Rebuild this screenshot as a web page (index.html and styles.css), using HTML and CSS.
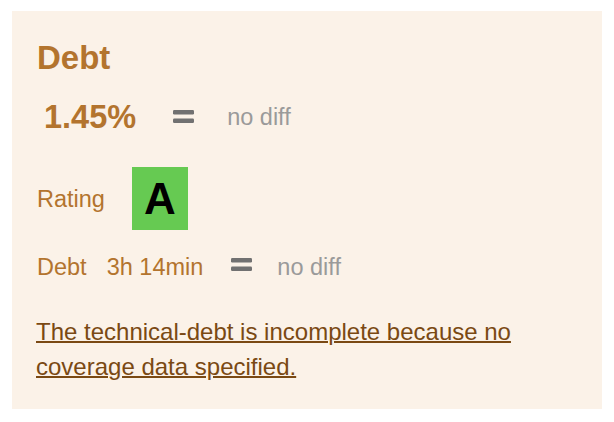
FILE: index.html
```html
<!DOCTYPE html>
<html lang="en">
<head>
<meta charset="utf-8">
<title>Debt</title>
<link rel="stylesheet" href="styles.css">
</head>
<body>
<section class="panel">
  <h2 class="title">Debt</h2>
  <div class="row row-main">
    <span class="big-value">1.45%</span>
    <svg class="eq eq-main" width="21" height="13" viewBox="0 0 21 13" aria-hidden="true"><rect x="0" y="0" width="21" height="4.5" rx="1.2"/><rect x="0" y="8.5" width="21" height="4.5" rx="1.2"/></svg>
    <span class="diff diff-main">no diff</span>
  </div>
  <div class="row row-rating">
    <span class="label">Rating</span>
    <span class="badge">A</span>
  </div>
  <div class="row row-debt">
    <span class="label">Debt</span>
    <span class="value">3h 14min</span>
    <svg class="eq eq-debt" width="21" height="13" viewBox="0 0 21 13" aria-hidden="true"><rect x="0" y="0" width="21" height="4.5" rx="1.2"/><rect x="0" y="8.5" width="21" height="4.5" rx="1.2"/></svg>
    <span class="diff diff-debt">no diff</span>
  </div>
  <p class="note"><a href="#" class="note-link">The technical-debt is incomplete because no coverage data specified.</a></p>
</section>
</body>
</html>
```
FILE: styles.css
```css
html, body {
  margin: 0;
  padding: 0;
  background: #ffffff;
}

body {
  font-family: "Liberation Sans", Arial, Helvetica, sans-serif;
  padding: 11px 12px 0 12px;
}

.panel {
  box-sizing: border-box;
  width: 590px;
  height: 398px;
  background: #fbf2e8;
  padding: 29px 23px 0 25px;
  display: flex;
  flex-direction: column;
  align-items: flex-start;
}

.title {
  margin: 0;
  font-size: 33px;
  line-height: 36px;
  font-weight: bold;
  color: #b3742e;
}

.row {
  display: flex;
  align-items: center;
}

.row-main {
  height: 40px;
  margin-top: 21px;
  margin-left: 7px;
}

.big-value {
  font-size: 32.5px;
  line-height: 40px;
  font-weight: bold;
  color: #b3742e;
}

.eq {
  fill: #717171;
  flex: none;
}

.eq-main {
  margin-left: 37px;
  margin-bottom: 2px;
}

.diff {
  font-size: 23.5px;
  line-height: 30px;
  color: #9a9a9a;
}

.diff-main {
  margin-left: 33px;
}

.row-rating {
  height: 63px;
  margin-top: 30px;
}

.label {
  font-size: 23.5px;
  line-height: 30px;
  color: #b3742e;
}

.badge {
  margin-left: 27px;
  width: 56px;
  height: 63px;
  background: #66ca52;
  color: #000000;
  font-weight: bold;
  font-size: 44px;
  display: flex;
  align-items: center;
  justify-content: center;
}

.row-debt {
  height: 30px;
  margin-top: 22px;
}

.value {
  margin-left: 20px;
  font-size: 23.5px;
  line-height: 30px;
  color: #b3742e;
}

.eq-debt {
  margin-left: 28px;
  margin-bottom: 5px;
}

.diff-debt {
  margin-left: 25px;
}

.note {
  margin: 32px 0 0 -1px;
  max-width: 500px;
  font-size: 24px;
  line-height: 35px;
}

.note-link {
  color: #7a4913;
  text-decoration: underline;
  text-decoration-thickness: 2px;
}
```
